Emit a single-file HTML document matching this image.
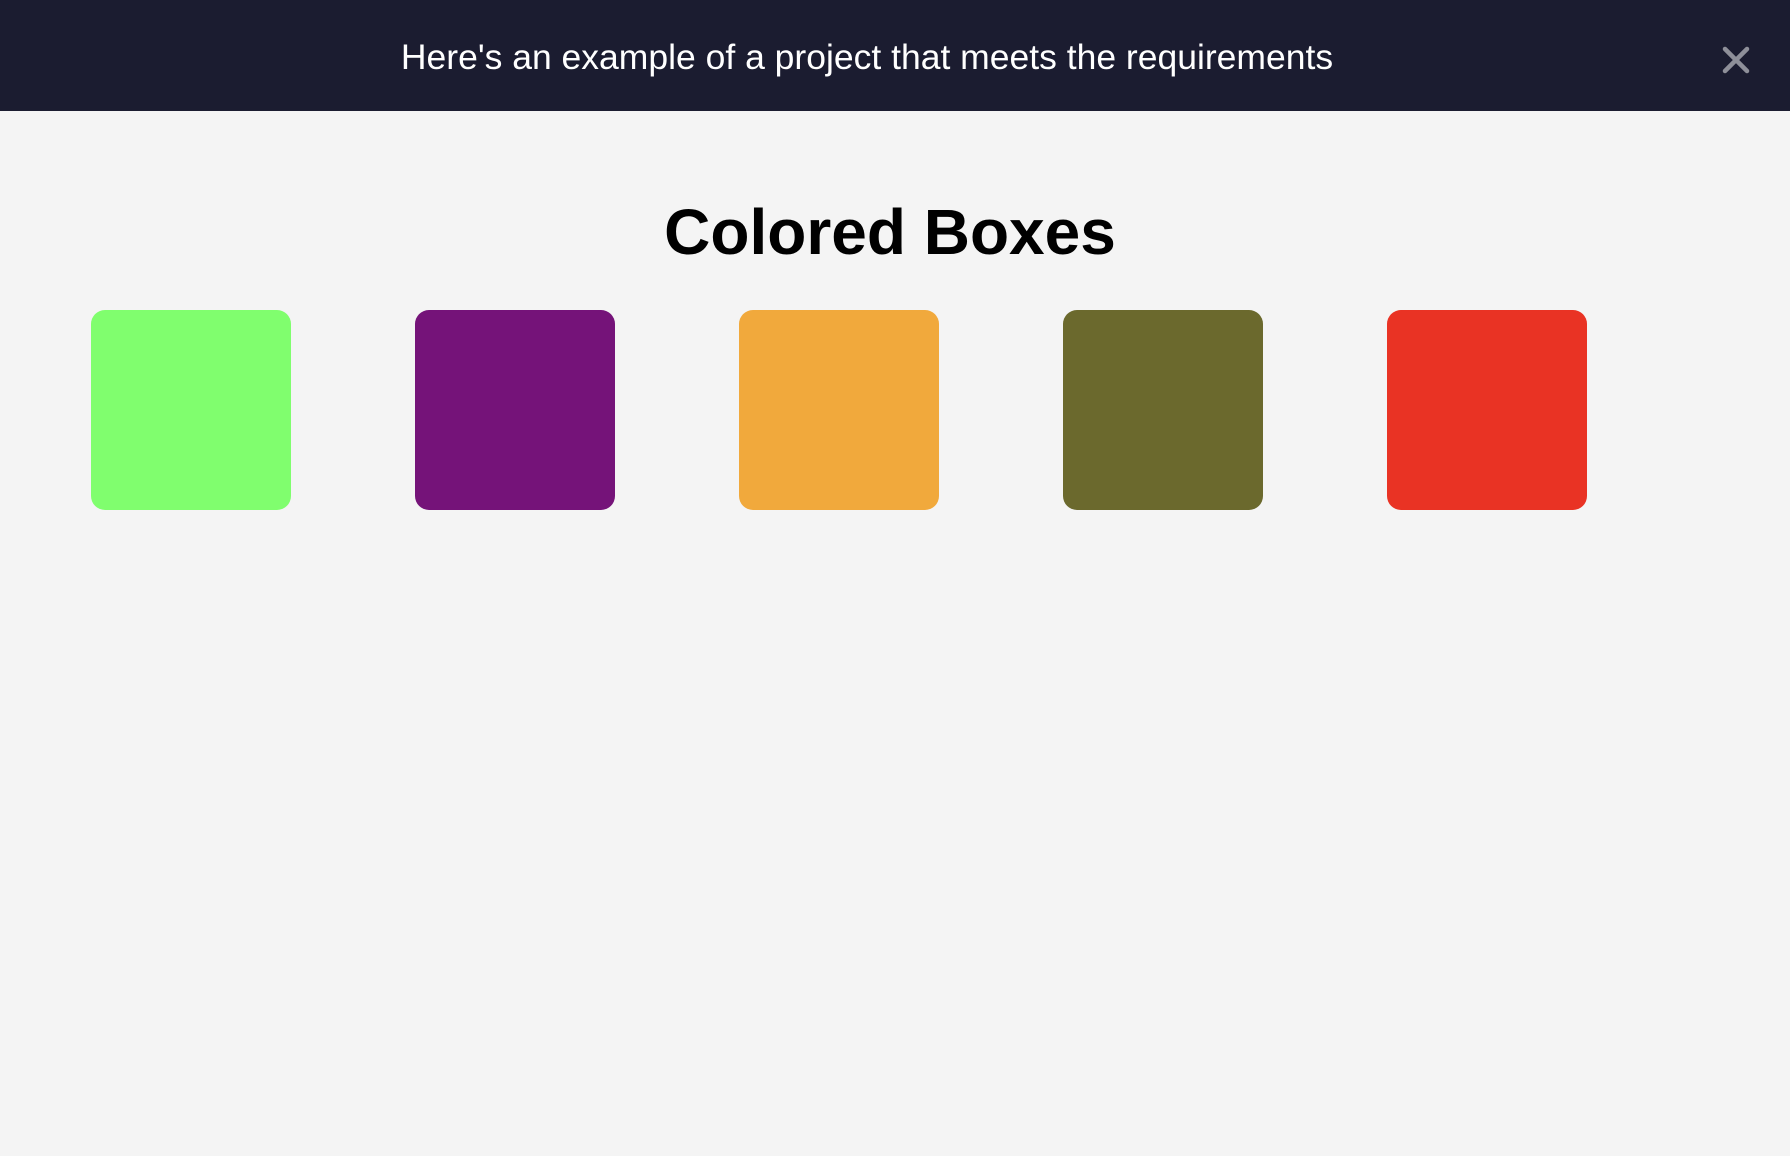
<!DOCTYPE html>
<html><head><meta charset="utf-8"><style>
html,body{margin:0;padding:0;width:1790px;height:1156px;background:#f4f4f4;overflow:hidden;}
.hdr{position:absolute;left:0;top:0;width:1790px;height:111px;background:#1b1c30;}
.hdr .t{position:absolute;left:0;width:1734px;top:0;line-height:114px;text-align:center;color:#fff;font-family:"Liberation Sans",sans-serif;font-size:35.5px;}
.x{position:absolute;left:1722px;top:46px;width:28px;height:28px;}
h1{position:absolute;left:0;width:1780px;top:196px;margin:0;text-align:center;font-family:"Liberation Sans",Arial,sans-serif;font-weight:bold;font-size:64px;line-height:72px;color:#000;}
.b{position:absolute;top:310px;width:200px;height:200px;border-radius:14px;}
</style></head><body>
<div class="hdr"><div class="t">Here's an example of a project that meets the requirements</div>
<svg class="x" viewBox="0 0 28 28"><path d="M3 3L25 25M25 3L3 25" stroke="#8e8f99" stroke-width="4.5" stroke-linecap="round"/></svg></div>
<h1>Colored Boxes</h1>
<div class="b" style="left:91px;background:#80fe6e"></div>
<div class="b" style="left:415px;background:#751379"></div>
<div class="b" style="left:739px;background:#f1a93c"></div>
<div class="b" style="left:1063px;background:#6b692d"></div>
<div class="b" style="left:1387px;background:#e93324"></div>
</body></html>
